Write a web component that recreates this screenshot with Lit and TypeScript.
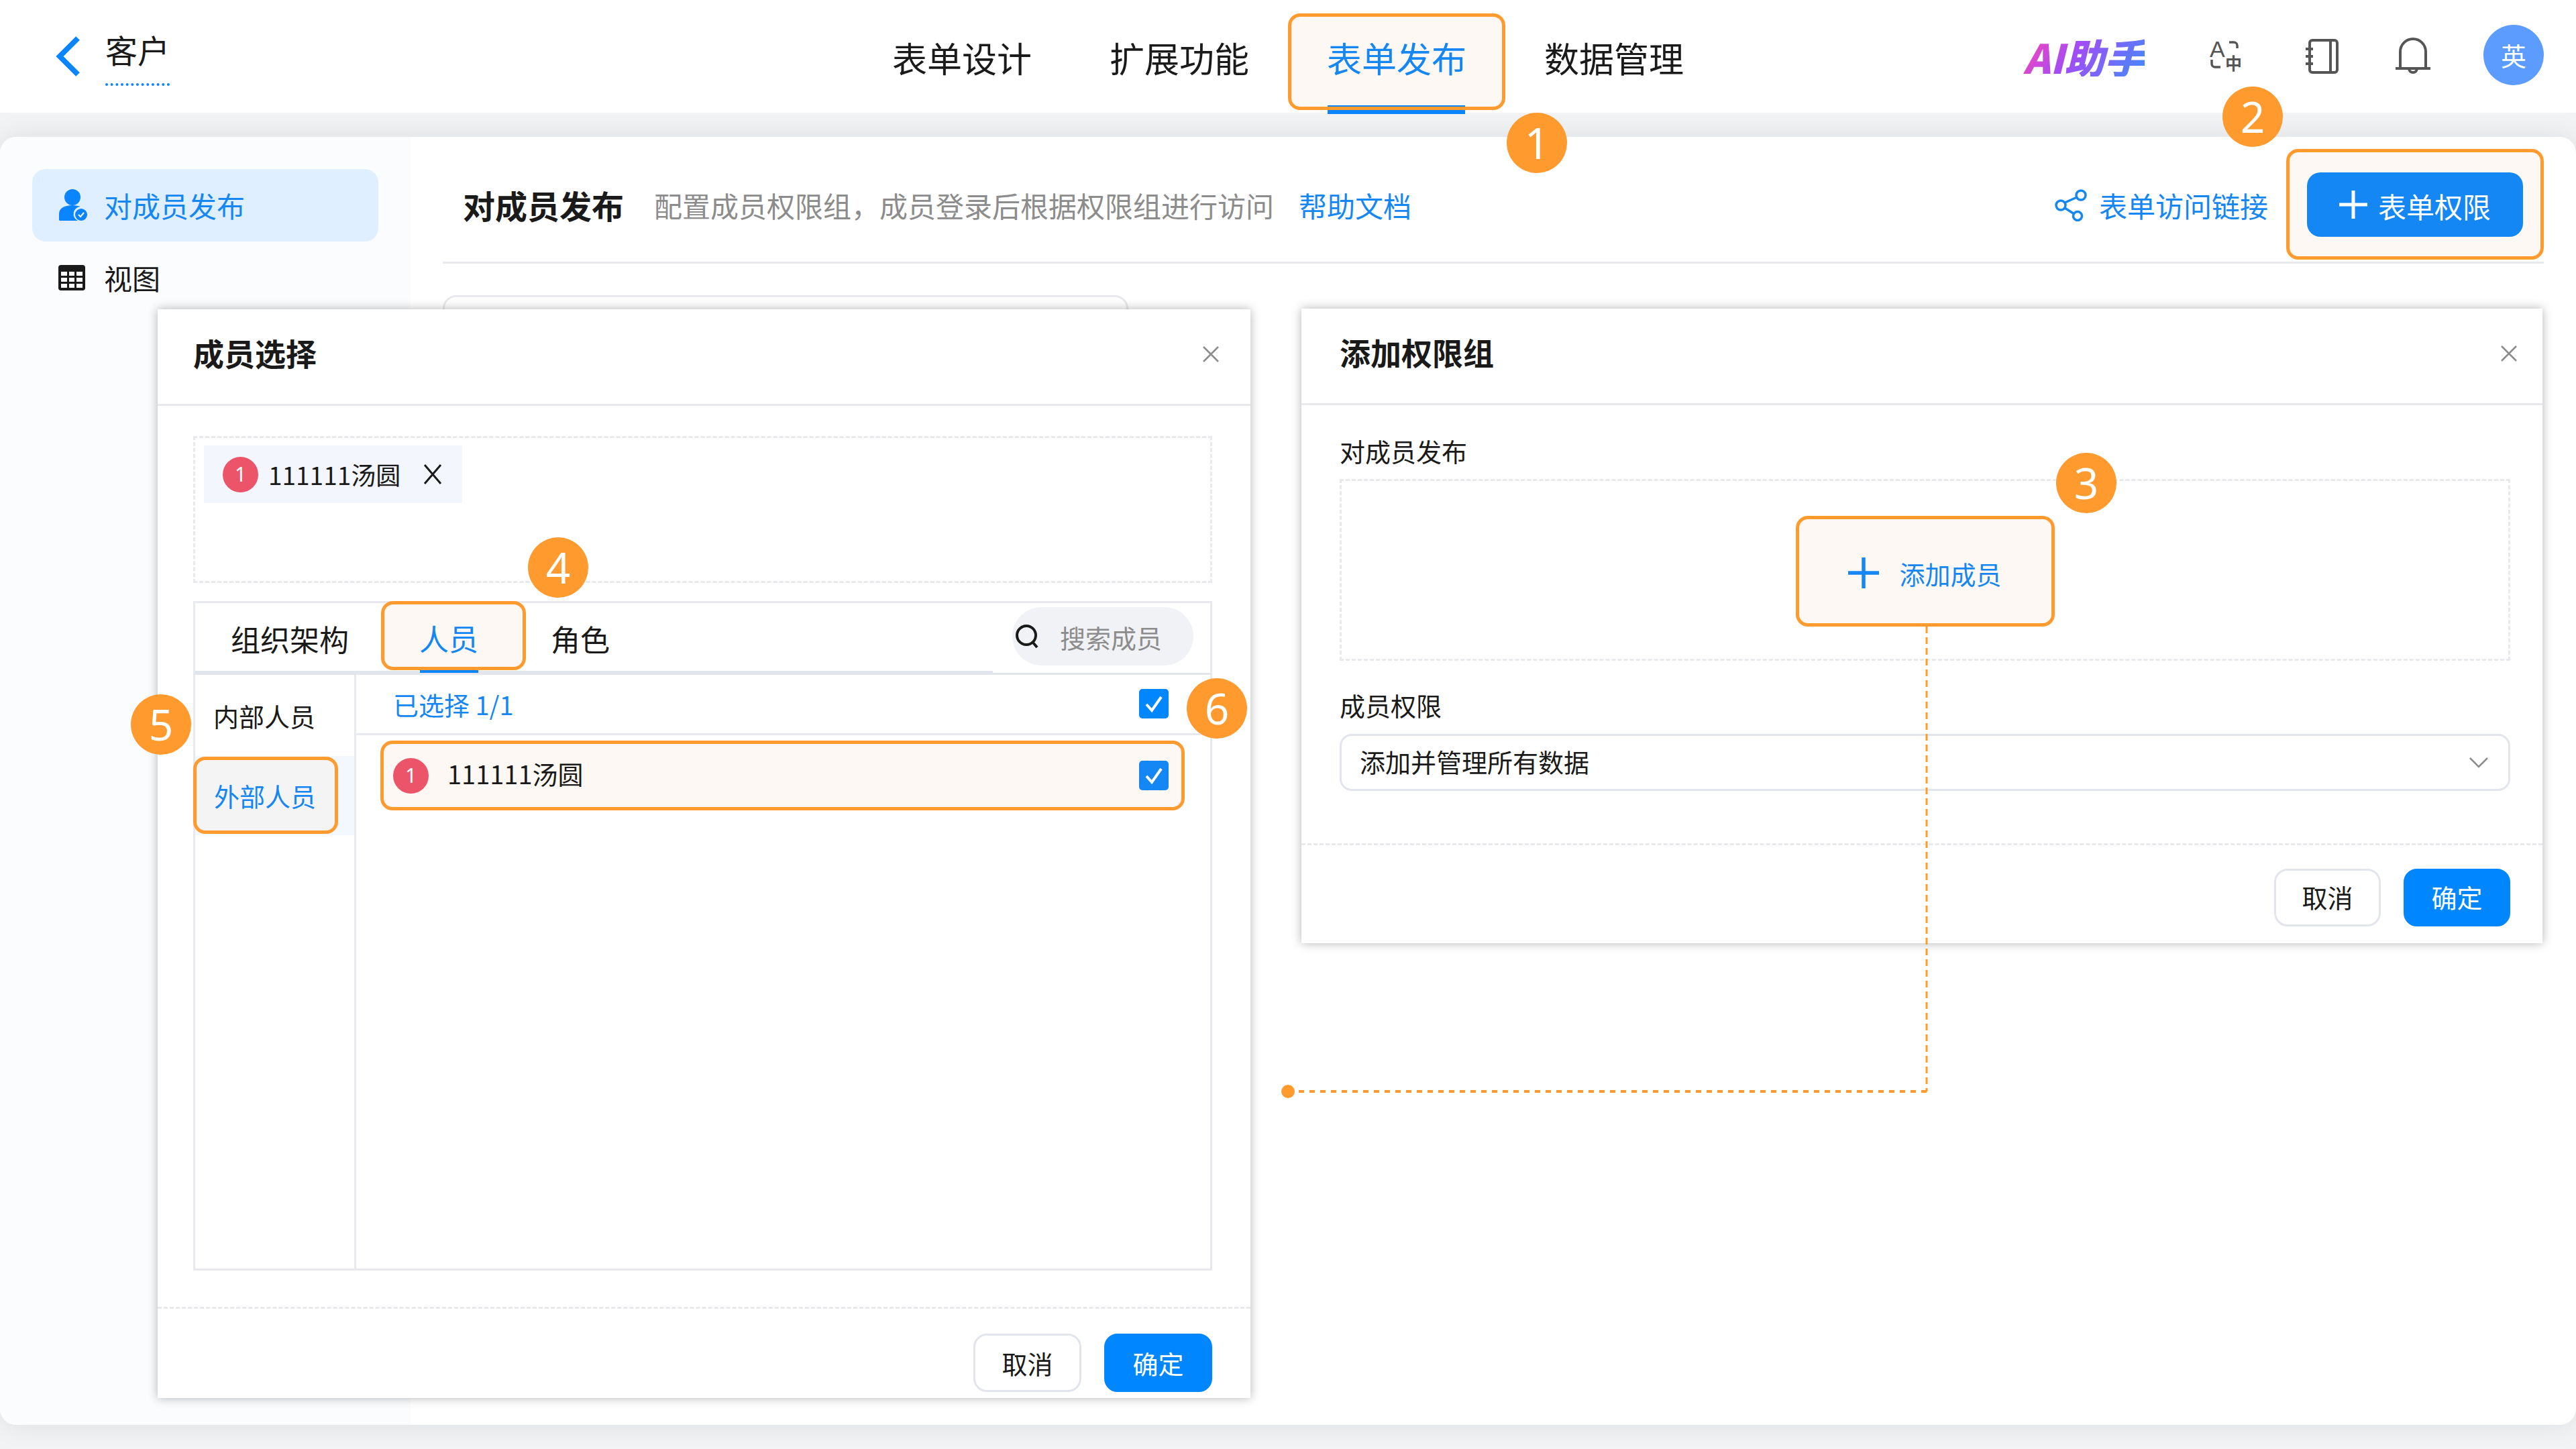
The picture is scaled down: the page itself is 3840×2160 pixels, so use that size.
import { LitElement, html, css, svg } from 'lit';
import { customElement } from 'lit/decorators.js';

const badges = [
  { n: 1, x: 2291, y: 213 },
  { n: 2, x: 3358, y: 174 },
  { n: 3, x: 3110, y: 720 },
  { n: 4, x: 832, y: 846 },
  { n: 5, x: 240, y: 1080 },
  { n: 6, x: 1814, y: 1056 },
];

const navTabs = ['表单设计', '扩展功能', '表单发布', '数据管理'];

const closeIcon = html`<svg class="close" viewBox="0 0 26 26" fill="none" stroke="#8c8c8c" stroke-width="2.5">
  <path d="M2 2l22 22M24 2L2 24" />
</svg>`;

const checkbox = html`<svg class="check" viewBox="0 0 44 44">
  <rect width="44" height="44" rx="5" fill="currentColor" />
  <path d="M11 23l8 9 14-20" fill="none" stroke="#fff" stroke-width="4" />
</svg>`;

const plusIcon = svg`<path d="M21 0v42M0 21h42" fill="none" stroke="currentColor" stroke-width="5" stroke-linecap="round" />`;

@customElement('app-root')
export class AppRoot extends LitElement {
  static styles = css`
    :host {
      display: block;
      position: relative;
      width: 3840px;
      height: 2160px;
      overflow: hidden;
      background: #f2f3f5;
      font-family: 'Noto Sans CJK SC', 'Liberation Sans', sans-serif;
      color: #1a1a1a;
      line-height: 1;
    }
    * {
      box-sizing: border-box;
    }
    svg {
      display: block;
      flex: none;
    }

    /* top bar */
    .topbar {
      position: relative;
      z-index: 1;
      height: 168px;
      background: #fff;
      display: grid;
      grid-template-columns: 1fr auto 1fr;
      align-items: center;
    }
    .back {
      display: flex;
      align-items: center;
      padding-left: 83px;
      gap: 38px;
      height: 100%;
    }
    .back svg {
      width: 36px;
      height: 60px;
    }
    .back span {
      font-size: 48px;
      padding-bottom: 27px;
      margin-top: 8px;
      border-bottom: 4px dotted #0a84ff;
    }
    .nav {
      display: flex;
      align-self: stretch;
    }
    .nav-tab {
      position: relative;
      width: 324px;
      display: flex;
      align-items: center;
      justify-content: center;
      font-size: 52px;
    }
    .nav-tab.active {
      color: #1487f4;
    }
    .nav-tab.active::before,
    .nav-tab.active::after {
      content: '';
      position: absolute;
      left: 0;
      right: 0;
      top: 20px;
      bottom: 4px;
      border-radius: 18px;
    }
    .nav-tab.active::before {
      background: #fdf8f3;
    }
    .nav-tab.active::after {
      border: 5px solid #ff9a2e;
    }
    .nav-bar {
      position: absolute;
      left: 59px;
      right: 60px;
      bottom: -2px;
      height: 13px;
      background: #0a84ff;
    }
    .nav-tab span {
      position: relative;
      top: 2px;
    }
    .tools {
      display: flex;
      align-items: center;
      justify-content: flex-end;
      padding-right: 48px;
    }
    .ai {
      font-size: 60px;
      font-weight: 900;
      font-style: italic;
      background: linear-gradient(125deg, #ff45b5 0%, #a24cf5 42%, #3f8cff 100%);
      -webkit-background-clip: text;
      background-clip: text;
      color: transparent;
      margin-right: 96px;
    }
    .tool {
      color: #555;
    }
    .avatar {
      width: 90px;
      height: 90px;
      border-radius: 50%;
      background: #5c9bff;
      color: #fff;
      font-size: 38px;
      display: flex;
      align-items: center;
      justify-content: center;
      margin-left: 77px;
      margin-top: -4px;
    }

    /* page card */
    .card {
      margin-top: 36px;
      height: 1920px;
      background: #fff;
      border-radius: 24px;
      box-shadow: 0 0 40px rgba(0, 0, 0, 0.09);
      display: flex;
      overflow: hidden;
    }
    .side {
      width: 612px;
      background: #fbfcfe;
      padding: 48px 48px 0;
    }
    .side-item {
      width: 516px;
      height: 108px;
      display: flex;
      align-items: center;
      gap: 24px;
      padding-left: 39px;
      font-size: 42px;
      border-radius: 20px;
    }
    .side-item.active {
      background: #e0efff;
      color: #1487f4;
    }
    .side-item + .side-item {
      gap: 28px;
    }
    .content {
      flex: 1;
      padding: 0 48px;
    }
    .page-head {
      height: 189px;
      padding-top: 15px;
      border-bottom: 3px solid #e8e9ec;
      display: flex;
      align-items: center;
      font-size: 42px;
    }
    .page-title {
      font-size: 48px;
      font-weight: 700;
      margin-left: 30px;
      margin-right: 45px;
    }
    .muted {
      color: #8c8c8c;
      padding-top: 3px;
    }
    .blue {
      color: #1487f4;
    }
    .help {
      margin-left: 37px;
      padding-top: 3px;
    }
    .share {
      margin-left: auto;
      display: flex;
      align-items: center;
      gap: 18px;
      margin-right: 27px;
      padding-top: 3px;
    }
    .mark {
      border: 5px solid #ff9a2e;
      background: #fdf8f3;
      border-radius: 18px;
    }
    .perm-wrap {
      width: 384px;
      height: 165px;
      display: flex;
      align-items: center;
      justify-content: center;
    }
    .perm-btn {
      width: 322px;
      height: 96px;
      border-radius: 20px;
      background: #1487f4;
      color: #fff;
      display: flex;
      align-items: center;
      justify-content: center;
      gap: 14px;
    }
    .perm-btn span {
      padding: 4px 0 0 2px;
    }
    .behind {
      width: 1022px;
      height: 400px;
      margin-top: 47px;
      border: 3px solid #e8e9ec;
      border-radius: 20px;
    }

    /* dialogs */
    .dialog {
      position: absolute;
      background: #fff;
      box-shadow: 0 0 14px rgba(0, 0, 0, 0.3);
      display: flex;
      flex-direction: column;
    }
    .members {
      left: 235px;
      top: 461px;
      width: 1629px;
      height: 1623px;
    }
    .group {
      left: 1940px;
      top: 460px;
      width: 1850px;
      height: 946px;
    }
    .dlg-head {
      flex: none;
      height: 144px;
      border-bottom: 3px solid #e8e9ec;
      display: flex;
      align-items: center;
      justify-content: space-between;
      font-size: 46px;
      font-weight: 700;
      padding-bottom: 14px;
    }
    .members .dlg-head {
      padding-left: 53px;
      padding-right: 46px;
    }
    .group .dlg-head {
      padding-left: 57px;
      padding-right: 37px;
    }
    .close {
      width: 26px;
      height: 26px;
      margin-top: 6px;
    }
    .dlg-foot {
      flex: none;
      border-top: 3px dashed #e8e9ec;
      display: flex;
      justify-content: flex-end;
      gap: 34px;
      font-size: 38px;
    }
    .members .dlg-foot {
      margin-top: 54px;
      padding: 37px 57px 0 0;
    }
    .group .dlg-foot {
      margin-top: 78px;
      padding: 35px 48px 0 0;
    }
    .btn {
      width: 161px;
      height: 87px;
      border-radius: 20px;
      border: 3px solid #e3e5ec;
      display: flex;
      align-items: center;
      justify-content: center;
    }
    .group .btn {
      width: 159px;
      height: 86px;
      padding-bottom: 3px;
    }
    .btn.primary {
      background: #0086ff;
      border-color: #0086ff;
      color: #fff;
    }

    /* member dialog */
    .picked {
      margin: 45px 57px 0 53px;
      height: 219px;
      border: 3px dashed #e8e9ec;
      padding: 11px 13px;
    }
    .chip {
      width: 385px;
      height: 86px;
      background: #f3f7fd;
      display: flex;
      align-items: center;
      padding-left: 28px;
      font-size: 37px;
    }
    .num {
      width: 53px;
      height: 53px;
      border-radius: 50%;
      background: #ec5569;
      color: #fff;
      font-size: 30px;
      font-family: 'Noto Sans', sans-serif;
      display: flex;
      align-items: center;
      justify-content: center;
      flex: none;
      margin-right: 15px;
    }
    .chip svg {
      width: 28px;
      height: 32px;
      margin-left: 34px;
    }
    .picker {
      margin: 27px 57px 0 53px;
      height: 998px;
      border: 3px solid #e8e9ec;
      display: flex;
      flex-direction: column;
    }
    .pick-tabs {
      flex: none;
      height: 107px;
      border-bottom: 3px solid #e2e6ec;
      display: flex;
      align-items: center;
      font-size: 44px;
      position: relative;
    }
    .pick-tabs::after {
      content: '';
      position: absolute;
      left: 0;
      width: 1189px;
      bottom: -3px;
      height: 6px;
      background: #e2e6ec;
    }
    .pick-tab {
      height: 104px;
      display: flex;
      align-items: center;
      position: relative;
    }
    .pick-tab.org {
      padding: 2px 48px 0 53px;
    }
    .pick-tab.person {
      width: 216px;
      height: 103px;
      margin-top: -8px;
      justify-content: center;
      padding: 8px 14px 0 0;
      color: #1487f4;
      z-index: 1;
    }
    .pick-tab.person::after {
      content: '';
      position: absolute;
      left: 53px;
      width: 87px;
      bottom: -9px;
      height: 4px;
      background: #0a84ff;
    }
    .pick-tab.role {
      padding: 2px 0 0 37px;
    }
    .search {
      margin-left: auto;
      margin-right: 25px;
      margin-top: -5px;
      width: 270px;
      height: 87px;
      border-radius: 44px;
      background: #f0f2f5;
      color: #8c8c8c;
      font-size: 38px;
      display: flex;
      align-items: center;
      gap: 30px;
      padding-left: 3px;
    }
    .search span {
      padding-top: 3px;
    }
    .search svg {
      width: 38px;
      height: 40px;
    }
    .pick-body {
      flex: 1;
      display: flex;
      min-height: 0;
      font-size: 38px;
    }
    .kinds {
      flex: none;
      width: 240px;
      border-right: 3px solid #e8e9ec;
    }
    .kind {
      height: 121px;
      display: flex;
      align-items: center;
      padding: 0 0 0 27px;
    }
    .kind-on {
      height: 118px;
      background: #f2f8fe;
      padding-top: 1px;
    }
    .kind.mark {
      width: 216px;
      height: 115px;
      padding-left: 26px;
      margin-left: -3px;
      background: #f4f4f4;
      color: #1487f4;
      position: relative;
    }
    .people {
      flex: 1;
    }
    .count {
      height: 90px;
      border-bottom: 3px solid #e8e9ec;
      display: flex;
      align-items: center;
      justify-content: space-between;
      padding: 0 62px 0 55px;
      color: #1487f4;
    }
    .count .check {
      margin-top: -2px;
    }
    .check {
      width: 44px;
      height: 44px;
      color: #0086ff;
    }
    .person-row {
      margin: 8px 38px 0 36px;
      height: 104px;
      display: flex;
      align-items: center;
      padding-left: 14px;
      padding-right: 19px;
      border-radius: 18px;
    }
    .person-row .num {
      margin-right: 28px;
    }
    .person-row span:not(.num) {
      padding-bottom: 7px;
    }
    .person-row .check {
      margin-left: auto;
      color: #1487f4;
    }

    /* group dialog */
    .field-label {
      font-size: 38px;
      margin-left: 57px;
      margin-top: 49px;
    }
    .slot + .field-label {
      margin-top: 47px;
    }
    .slot {
      margin: 23px 48px 0 57px;
      height: 271px;
      border: 3px dashed #e8e9ec;
      display: flex;
      justify-content: center;
      padding-top: 52px;
    }
    .add-btn {
      width: 386px;
      height: 165px;
      display: flex;
      align-items: center;
      justify-content: center;
      gap: 30px;
      font-size: 38px;
      color: #1487f4;
      padding-top: 4px;
    }
    .add-btn span {
      padding-top: 3px;
    }
    .select {
      margin: 24px 48px 0 57px;
      height: 85px;
      border: 3px solid #e3e5ec;
      border-radius: 18px;
      display: flex;
      align-items: center;
      justify-content: space-between;
      padding: 0 30px 0 27px;
      font-size: 38px;
    }
    .select span {
      padding-bottom: 3px;
    }
    .select svg {
      width: 28px;
      height: 16px;
    }

    /* annotations */
    .connector {
      position: absolute;
      left: 1900px;
      top: 930px;
      width: 990px;
      height: 720px;
    }
    .badge {
      position: absolute;
      width: 90px;
      height: 90px;
      margin: -45px 0 0 -45px;
      border-radius: 50%;
      background: #ff9a2e;
      color: #fff;
      font-family: 'Noto Sans', sans-serif;
      font-size: 64px;
      display: flex;
      align-items: center;
      justify-content: center;
      z-index: 2;
    }
  `;

  private _topbar() {
    return html`
      <header class="topbar">
        <div class="back">
          <svg viewBox="0 0 36 60" fill="none" stroke="#0a84ff" stroke-width="8"><path d="M33 3L6 30l27 27" /></svg>
          <span>客户</span>
        </div>
        <nav class="nav">
          ${navTabs.map((t) =>
            t === '表单发布'
              ? html`<div class="nav-tab active"><i class="nav-bar"></i><span>${t}</span></div>`
              : html`<div class="nav-tab"><span>${t}</span></div>`,
          )}
        </nav>
        <div class="tools">
          <span class="ai">AI助手</span>
          <svg class="tool" width="50" height="60" viewBox="0 0 50 60" fill="none" stroke="currentColor" stroke-width="3.5">
            <text x="1" y="31" font-size="34" fill="currentColor" stroke="none" font-family="Liberation Sans">A</text>
            <text x="24" y="50" font-size="25" font-weight="700" fill="currentColor" stroke="none">中</text>
            <path d="M30 9h7a5 5 0 0 1 5 5v4M4 35v6a5 5 0 0 0 5 5h8" />
          </svg>
          <svg class="tool" style="margin-left:92px" width="52" height="54" viewBox="0 0 52 54" fill="none" stroke="currentColor" stroke-width="4">
            <rect x="8" y="3" width="41" height="48" rx="4" />
            <path d="M39 3v48M2 16h11M2 27h11M2 38h11" />
          </svg>
          <svg class="tool" style="margin-left:82px" width="56" height="56" viewBox="0 0 56 56" fill="none" stroke="currentColor" stroke-width="4">
            <path d="M2 46h52M9 46V21a19 19 0 0 1 38 0v25M22 46a6 6 0 0 0 12 0" />
          </svg>
          <div class="avatar">英</div>
        </div>
      </header>
    `;
  }

  private _page() {
    return html`
      <section class="card">
        <aside class="side">
          <div class="side-item active">
            <svg width="44" height="50" viewBox="0 0 44 50">
              <circle cx="21" cy="13" r="12" fill="#0a84ff" />
              <path d="M1 47V38c0-8 7-13 20-13 5 0 9 1 12 2a11 11 0 0 0-4 21H3a2 2 0 0 1-2-1z" fill="#0a84ff" />
              <circle cx="34" cy="39" r="9" fill="#0a84ff" />
              <path d="M30 39l3 3 5-6" fill="none" stroke="#fff" stroke-width="2" />
            </svg>
            <span>对成员发布</span>
          </div>
          <div class="side-item">
            <svg width="40" height="38" viewBox="0 0 40 38">
              <rect width="40" height="38" rx="4" fill="#1a1a1a" />
              <path d="M4 10h9v6H4zM16 10h8v6h-8zM27 10h9v6h-9zM4 19h9v6H4zM16 19h8v6h-8zM27 19h9v6h-9zM4 28h9v6H4zM16 28h8v6h-8zM27 28h9v6h-9z" fill="#fff" />
            </svg>
            <span>视图</span>
          </div>
        </aside>
        <div class="content">
          <div class="page-head">
            <span class="page-title">对成员发布</span>
            <span class="muted">配置成员权限组，成员登录后根据权限组进行访问</span>
            <span class="blue help">帮助文档</span>
            <span class="blue share">
              <svg width="48" height="48" viewBox="0 0 48 48" fill="none" stroke="currentColor" stroke-width="3.5">
                <circle cx="39" cy="9" r="7" /><circle cx="9" cy="24" r="7" /><circle cx="34" cy="40" r="6.5" />
                <path d="M15 20l18-8M15 28l14 9" />
              </svg>
              表单访问链接
            </span>
            <div class="perm-wrap mark">
              <div class="perm-btn">
                <svg width="42" height="42" viewBox="0 0 42 42" style="color:#fff">${plusIcon}</svg>
                <span>表单权限</span>
              </div>
            </div>
          </div>
          <div class="behind"></div>
        </div>
      </section>
    `;
  }

  private _memberDialog() {
    return html`
      <section class="dialog members">
        <div class="dlg-head"><span>成员选择</span>${closeIcon}</div>
        <div class="picked">
          <div class="chip">
            <span class="num">1</span>
            <span>111111汤圆</span>
            <svg viewBox="0 0 28 32" fill="none" stroke="#1a1a1a" stroke-width="3"><path d="M2 2l24 28M26 2L2 30" /></svg>
          </div>
        </div>
        <div class="picker">
          <div class="pick-tabs">
            <div class="pick-tab org">组织架构</div>
            <div class="pick-tab person mark">人员</div>
            <div class="pick-tab role">角色</div>
            <div class="search">
              <svg viewBox="0 0 38 40" fill="none" stroke="#1a1a1a" stroke-width="4">
                <circle cx="18" cy="18" r="14" /><path d="M28 29l6 7" />
              </svg>
              <span>搜索成员</span>
            </div>
          </div>
          <div class="pick-body">
            <div class="kinds">
              <div class="kind">内部人员</div>
              <div class="kind-on"><div class="kind mark">外部人员</div></div>
            </div>
            <div class="people">
              <div class="count"><span>已选择 1/1</span>${checkbox}</div>
              <div class="person-row mark">
                <span class="num">1</span>
                <span>111111汤圆</span>
                ${checkbox}
              </div>
            </div>
          </div>
        </div>
        <div class="dlg-foot">
          <div class="btn">取消</div>
          <div class="btn primary">确定</div>
        </div>
      </section>
    `;
  }

  private _groupDialog() {
    return html`
      <section class="dialog group">
        <div class="dlg-head"><span>添加权限组</span>${closeIcon}</div>
        <div class="field-label">对成员发布</div>
        <div class="slot">
          <div class="add-btn mark">
            <svg width="46" height="46" viewBox="0 0 42 42">${plusIcon}</svg>
            <span>添加成员</span>
          </div>
        </div>
        <div class="field-label">成员权限</div>
        <div class="select">
          <span>添加并管理所有数据</span>
          <svg viewBox="0 0 28 16" fill="none" stroke="#8c8c8c" stroke-width="2.5"><path d="M1 1l13 13L27 1" /></svg>
        </div>
        <div class="dlg-foot">
          <div class="btn">取消</div>
          <div class="btn primary">确定</div>
        </div>
      </section>
    `;
  }

  render() {
    return html`
      ${this._topbar()} ${this._page()} ${this._memberDialog()} ${this._groupDialog()}
      <svg class="connector" viewBox="0 0 990 720" fill="none" stroke="#ff9a2e">
        <path d="M972 4V697" stroke-width="3" stroke-dasharray="10 6" />
        <path d="M972 697H30" stroke-width="4" stroke-dasharray="8 8" />
        <circle cx="20" cy="697" r="10" fill="#ff9a2e" stroke="none" />
      </svg>
      ${badges.map((b) => html`<div class="badge" style="left:${b.x}px;top:${b.y}px">${b.n}</div>`)}
    `;
  }
}
